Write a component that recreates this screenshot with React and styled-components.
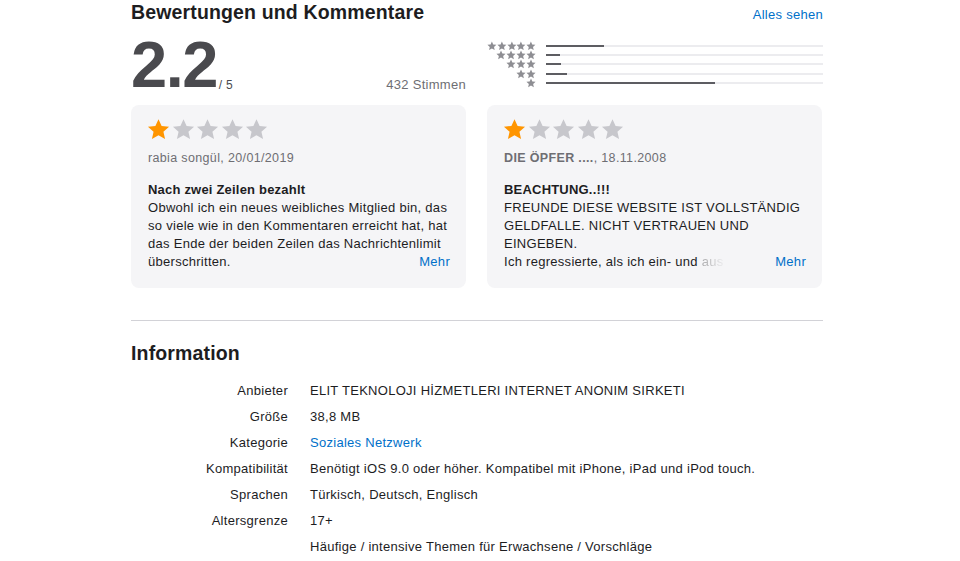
import React from 'react'
import styled, { createGlobalStyle } from 'styled-components'

const Global = createGlobalStyle`
  body {
    margin: 0;
    background: #fff;
    font-family: "Liberation Sans", Arial, sans-serif;
    color: #1d1d1f;
    letter-spacing: 0.28px;
  }
`

const Page = styled.div`
  width: 692px;
  margin-left: 131px;
`

const Header = styled.header`
  display: flex;
  justify-content: space-between;
  align-items: baseline;
  height: 26px;
`

const Title = styled.h2`
  margin: 0;
  font-size: 19.5px;
  line-height: 24px;
  font-weight: bold;
  letter-spacing: 0.15px;
`

const Link = styled.a`
  color: #0070c9;
  font-size: 13px;
  text-decoration: none;
`

const Summary = styled.div`
  display: flex;
  justify-content: space-between;
  height: 79px;
`

const Score = styled.div`
  width: 335px;
  display: flex;
  align-items: flex-end;
  padding-bottom: 12px;
  box-sizing: border-box;
`

const Big = styled.span`
  font-size: 65px;
  line-height: 56px;
  font-weight: bold;
  color: #4a4a4e;
  letter-spacing: -1.5px;
`

const OutOf = styled.span`
  font-size: 12px;
  color: #4a4a4e;
  margin-left: 2px;
  margin-bottom: 1px;
`

const Votes = styled.span`
  margin-left: auto;
  font-size: 13px;
  color: #6e6e73;
  margin-bottom: 1px;
`

const Histogram = styled.div`
  width: 336px;
  padding-top: 15px;
  display: flex;
  flex-direction: column;
`

const HistRow = styled.div`
  display: flex;
  align-items: center;
  height: 9.3px;
`

const MiniStars = styled.div`
  width: 49px;
  display: flex;
  justify-content: flex-end;
  margin-right: 10px;
`

const Track = styled.div`
  flex: 1;
  height: 2px;
  background: #ececef;
`

const Fill = styled.div`
  height: 2px;
  background: #5d5d62;
`

const Cards = styled.div`
  display: grid;
  grid-template-columns: 335px 335px;
  gap: 21px;
`

const Card = styled.article`
  background: #f5f5f7;
  border-radius: 8px;
  height: 183px;
  padding: 13px 16px 0 17px;
  box-sizing: border-box;
  font-size: 13px;
`

const StarRow = styled.div`
  display: flex;
  gap: 1.5px;
  margin-left: -1px;
`

const Meta = styled.div`
  margin-top: 9px;
  font-size: 12.5px;
  color: #6e6e73;
  line-height: 16px;
  letter-spacing: 0.35px;
`

const MetaName = styled.span`
  font-weight: ${p => (p.$bold ? 'bold' : 'normal')};
`

const ReviewTitle = styled.h3`
  margin: 15px 0 0;
  font-size: 13px;
  line-height: 18px;
  font-weight: bold;
  letter-spacing: 0.2px;
`

const Body = styled.div`
  position: relative;
  line-height: 18px;
  height: 72px;
`

const Fade = styled.span`
  background: linear-gradient(to right, rgba(29, 29, 31, 0.35), rgba(29, 29, 31, 0.05));
  -webkit-background-clip: text;
  background-clip: text;
  color: transparent;
`

const More = styled.a`
  position: absolute;
  right: 0;
  bottom: 0;
  line-height: 18px;
  color: #0070c9;
  text-decoration: none;
`

const Divider = styled.hr`
  margin: 32px 0 0;
  border: 0;
  border-top: 1px solid #d2d2d7;
`

const InfoTitle = styled.h2`
  margin: 20px 0 0;
  font-size: 19.5px;
  line-height: 24px;
  font-weight: bold;
  letter-spacing: 0.15px;
`

const InfoList = styled.dl`
  margin: 13px 0 0;
  display: grid;
  grid-template-columns: 157px 1fr;
  column-gap: 22px;
  font-size: 13px;
`

const Term = styled.dt`
  text-align: right;
  line-height: 26px;
`

const Value = styled.dd`
  margin: 0;
  line-height: 26px;
  color: ${p => (p.$link ? '#0070c9' : '#1d1d1f')};
`

const Star = ({ size, color }) => (
  <svg width={size} height={size} viewBox="0 0 24 24">
    <path
      d="M12 1.2l3.25 7.1 7.75.75-5.85 5.2 1.7 7.65L12 17.9l-6.85 4 1.7-7.65L1 9.05l7.75-.75z"
      fill={color}
    />
  </svg>
)

const hist = [
  { n: 5, w: 21 },
  { n: 4, w: 5 },
  { n: 3, w: 5.5 },
  { n: 2, w: 7.5 },
  { n: 1, w: 61 },
]

const reviews = [
  {
    name: 'rabia songül',
    bold: false,
    date: '20/01/2019',
    title: 'Nach zwei Zeilen bezahlt',
    text: 'Obwohl ich ein neues weibliches Mitglied bin, das so viele wie in den Kommentaren erreicht hat, hat das Ende der beiden Zeilen das Nachrichtenlimit überschritten.',
  },
  {
    name: 'DIE ÖPFER ....',
    bold: true,
    date: '18.11.2008',
    title: 'BEACHTUNG..!!!',
    text: (
      <>
        FREUNDE DIESE WEBSITE IST VOLLSTÄNDIG GELDFALLE. NICHT VERTRAUEN UND
        <br />
        EINGEBEN.
        <br />
        Ich regressierte, als ich ein- und <Fade>aus</Fade>
      </>
    ),
  },
]

const info = [
  ['Anbieter', 'ELIT TEKNOLOJI HİZMETLERI INTERNET ANONIM SIRKETI'],
  ['Größe', '38,8 MB'],
  ['Kategorie', 'Soziales Netzwerk', true],
  ['Kompatibilität', 'Benötigt iOS 9.0 oder höher. Kompatibel mit iPhone, iPad und iPod touch.'],
  ['Sprachen', 'Türkisch, Deutsch, Englisch'],
  ['Altersgrenze', '17+'],
  ['', 'Häufige / intensive Themen für Erwachsene / Vorschläge'],
]

export default function App() {
  return (
    <>
      <Global />
      <Page>
        <Header>
          <Title>Bewertungen und Kommentare</Title>
          <Link href="#">Alles sehen</Link>
        </Header>
        <Summary>
          <Score>
            <Big>2.2</Big>
            <OutOf>/ 5</OutOf>
            <Votes>432 Stimmen</Votes>
          </Score>
          <Histogram>
            {hist.map(r => (
              <HistRow key={r.n}>
                <MiniStars>
                  {Array.from({ length: r.n }).map((_, i) => (
                    <Star key={i} size={10} color="#8e8e93" />
                  ))}
                </MiniStars>
                <Track>
                  <Fill style={{ width: `${r.w}%` }} />
                </Track>
              </HistRow>
            ))}
          </Histogram>
        </Summary>
        <Cards>
          {reviews.map((r, i) => (
            <Card key={i}>
              <StarRow>
                {[0, 1, 2, 3, 4].map(s => (
                  <Star key={s} size={23} color={s === 0 ? '#ff9500' : '#c7c7cc'} />
                ))}
              </StarRow>
              <Meta>
                <MetaName $bold={r.bold}>{r.name}</MetaName>, {r.date}
              </Meta>
              <ReviewTitle>{r.title}</ReviewTitle>
              <Body>
                {r.text}
                <More href="#">Mehr</More>
              </Body>
            </Card>
          ))}
        </Cards>
        <Divider />
        <InfoTitle>Information</InfoTitle>
        <InfoList>
          {info.map(([k, v, link], i) => (
            <React.Fragment key={i}>
              <Term>{k}</Term>
              <Value $link={link}>{v}</Value>
            </React.Fragment>
          ))}
        </InfoList>
      </Page>
    </>
  )
}
